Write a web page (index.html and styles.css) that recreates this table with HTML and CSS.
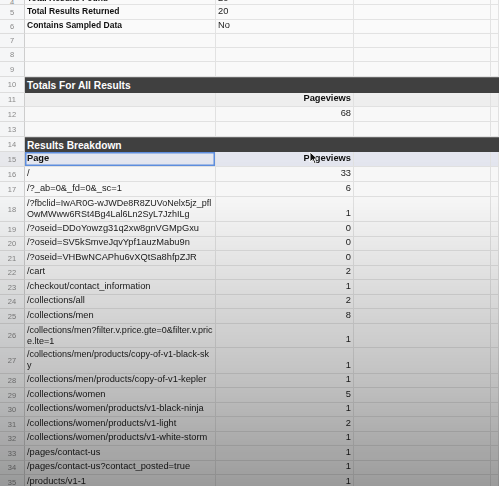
FILE: index.html
```html
<!DOCTYPE html>
<html>
<head>
<meta charset="utf-8">
<link rel="stylesheet" href="styles.css">
</head>
<body>
<div class="sheet">
  <div class="row top"><div class="rh">4</div><div class="c b lab">Total Results Found</div><div class="c">20</div><div class="c"></div><div class="c"></div></div>
  <div class="row"><div class="rh">5</div><div class="c b lab">Total Results Returned</div><div class="c">20</div><div class="c"></div><div class="c"></div></div>
  <div class="row"><div class="rh">6</div><div class="c b lab">Contains Sampled Data</div><div class="c">No</div><div class="c"></div><div class="c"></div></div>
  <div class="row"><div class="rh">7</div><div class="c"></div><div class="c"></div><div class="c"></div><div class="c"></div></div>
  <div class="row"><div class="rh">8</div><div class="c"></div><div class="c"></div><div class="c"></div><div class="c"></div></div>
  <div class="row"><div class="rh">9</div><div class="c"></div><div class="c"></div><div class="c"></div><div class="c"></div></div>
  <div class="row"><div class="rh">10</div><div class="band">Totals For All Results</div></div>
  <div class="row grey"><div class="rh">11</div><div class="c"></div><div class="c b num">Pageviews</div><div class="c"></div><div class="c"></div></div>
  <div class="row"><div class="rh">12</div><div class="c"></div><div class="c num">68</div><div class="c"></div><div class="c"></div></div>
  <div class="row"><div class="rh">13</div><div class="c"></div><div class="c"></div><div class="c"></div><div class="c"></div></div>
  <div class="row"><div class="rh">14</div><div class="band">Results Breakdown</div></div>
  <div class="row head"><div class="rh">15</div><div class="c b sel">Page</div><div class="c b num">Pageviews</div><div class="c"></div><div class="c"></div></div>
  <div class="row"><div class="rh">16</div><div class="c">/</div><div class="c num">33</div><div class="c"></div><div class="c"></div></div>
  <div class="row"><div class="rh">17</div><div class="c">/?_ab=0&amp;_fd=0&amp;_sc=1</div><div class="c num">6</div><div class="c"></div><div class="c"></div></div>
  <div class="row"><div class="rh">18</div><div class="c wrap">/?fbclid=IwAR0G-wJWDe8R8ZUVoNelx5jz_pfl<br>OwMWww6RSt4Bg4Lal6Ln2SyL7JzhILg</div><div class="c num">1</div><div class="c"></div><div class="c"></div></div>
  <div class="row"><div class="rh">19</div><div class="c">/?oseid=DDoYowzg31q2xw8gnVGMpGxu</div><div class="c num">0</div><div class="c"></div><div class="c"></div></div>
  <div class="row"><div class="rh">20</div><div class="c">/?oseid=SV5kSmveJqvYpf1auzMabu9n</div><div class="c num">0</div><div class="c"></div><div class="c"></div></div>
  <div class="row"><div class="rh">21</div><div class="c">/?oseid=VHBwNCAPhu6vXQtSa8hfpZJR</div><div class="c num">0</div><div class="c"></div><div class="c"></div></div>
  <div class="row"><div class="rh">22</div><div class="c">/cart</div><div class="c num">2</div><div class="c"></div><div class="c"></div></div>
  <div class="row"><div class="rh">23</div><div class="c">/checkout/contact_information</div><div class="c num">1</div><div class="c"></div><div class="c"></div></div>
  <div class="row"><div class="rh">24</div><div class="c">/collections/all</div><div class="c num">2</div><div class="c"></div><div class="c"></div></div>
  <div class="row"><div class="rh">25</div><div class="c">/collections/men</div><div class="c num">8</div><div class="c"></div><div class="c"></div></div>
  <div class="row"><div class="rh">26</div><div class="c wrap">/collections/men?filter.v.price.gte=0&amp;filter.v.pric<br>e.lte=1</div><div class="c num">1</div><div class="c"></div><div class="c"></div></div>
  <div class="row"><div class="rh">27</div><div class="c wrap">/collections/men/products/copy-of-v1-black-sk<br>y</div><div class="c num">1</div><div class="c"></div><div class="c"></div></div>
  <div class="row"><div class="rh">28</div><div class="c">/collections/men/products/copy-of-v1-kepler</div><div class="c num">1</div><div class="c"></div><div class="c"></div></div>
  <div class="row"><div class="rh">29</div><div class="c">/collections/women</div><div class="c num">5</div><div class="c"></div><div class="c"></div></div>
  <div class="row"><div class="rh">30</div><div class="c">/collections/women/products/v1-black-ninja</div><div class="c num">1</div><div class="c"></div><div class="c"></div></div>
  <div class="row"><div class="rh">31</div><div class="c">/collections/women/products/v1-light</div><div class="c num">2</div><div class="c"></div><div class="c"></div></div>
  <div class="row"><div class="rh">32</div><div class="c">/collections/women/products/v1-white-storm</div><div class="c num">1</div><div class="c"></div><div class="c"></div></div>
  <div class="row"><div class="rh">33</div><div class="c">/pages/contact-us</div><div class="c num">1</div><div class="c"></div><div class="c"></div></div>
  <div class="row"><div class="rh">34</div><div class="c">/pages/contact-us?contact_posted=true</div><div class="c num">1</div><div class="c"></div><div class="c"></div></div>
  <div class="row"><div class="rh">35</div><div class="c">/products/v1-1</div><div class="c num">1</div><div class="c"></div><div class="c"></div></div>
</div>
<svg class="cursor" width="10" height="14" viewBox="0 0 10 14"><path d="M1 1 L1 11 L3.5 8.6 L5.4 12.6 L7 11.9 L5.2 8 L8.6 8 Z" fill="#111" stroke="#fff" stroke-width="1"/></svg>
<div class="shade"></div>
</body>
</html>
```
FILE: styles.css
```css
html, body {
  margin: 0;
  padding: 0;
  background: #fafafa;
  overflow: hidden;
}
body {
  width: 499px;
  height: 486px;
  font-family: "Liberation Sans", Arial, sans-serif;
  color: #222;
}
.sheet {
  display: grid;
  grid-template-rows: 5px 15px 14px 14px 14px 15px 16px 14px 15px 15px 15px 15px 15px 15px 25px 15px 14px 15px 14px 15px 14px 15px 24px 26px 14px 15px 14px 15px 14px 15px 14px 15px;
  filter: blur(0.35px);
}
.row {
  display: grid;
  grid-template-columns: 25px 191px 138px 137px 1fr;
  grid-template-rows: minmax(0, 1fr);
  min-height: 0;
  overflow: hidden;
}
.rh {
  background: #f6f7f8;
  color: #8a8a8a;
  font-size: 7.5px;
  display: flex;
  align-items: center;
  justify-content: center;
  border-right: 1px solid #cfcfcf;
  border-bottom: 1px solid #dedede;
  overflow: hidden;
  min-height: 0;
}
.c {
  display: flex;
  align-items: flex-end;
  padding: 0 2px 2px 2px;
  font-size: 9.3px;
  line-height: 11px;
  white-space: nowrap;
  overflow: hidden;
  border-right: 1px solid #e3e3e3;
  border-bottom: 1px solid #e3e3e3;
  min-height: 0;
}
.top .c { padding-bottom: 0; }
.c.wrap {
  align-items: flex-start;
  padding-top: 1px;
  font-size: 9px;
}
.b { font-weight: bold; color: #111; }
.lab { font-size: 8.5px; }
.num { justify-content: flex-end; }
.band {
  grid-column: 2 / -1;
  background: #414141;
  color: #fff;
  font-weight: bold;
  font-size: 10.2px;
  display: flex;
  align-items: center;
  padding-left: 2px;
  border-top: 1px solid #6a6a6a;
}
.grey .c { background: #f0f0f0; }
.head .c { background: #e6e8f1; }
.head .rh { background: #e9eaee; }
.sel { box-shadow: inset 0 0 0 1.5px #5f8fe0; }
.cursor {
  position: absolute;
  left: 309px;
  top: 151px;
}
.shade {
  position: fixed;
  inset: 0;
  pointer-events: none;
  background: linear-gradient(to bottom, rgba(0,0,0,0) 0%, rgba(0,0,0,0.01) 40%, rgba(0,0,0,0.12) 60%, rgba(0,0,0,0.24) 80%, rgba(0,0,0,0.38) 100%);
}
```
